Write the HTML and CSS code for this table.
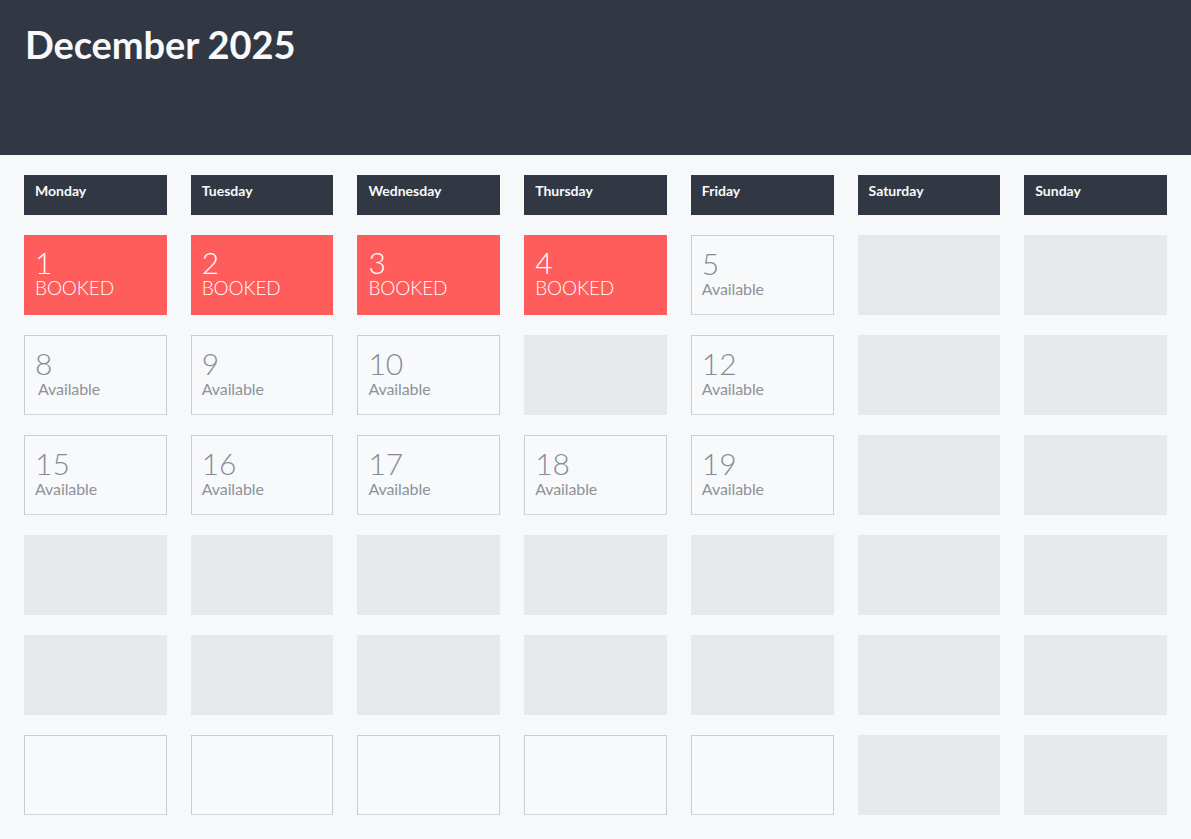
FILE: index.html
```html
<!DOCTYPE html>
<html>
<head>
<meta charset="utf-8">
<link rel="stylesheet" href="styles.css">
</head>
<body>
<header class="top">
  <h1 class="title">December 2025</h1>
</header>
<main class="calendar">
  <div class="dayname">Monday</div>
  <div class="dayname">Tuesday</div>
  <div class="dayname">Wednesday</div>
  <div class="dayname">Thursday</div>
  <div class="dayname">Friday</div>
  <div class="dayname">Saturday</div>
  <div class="dayname">Sunday</div>

  <div class="cell booked"><div class="num">1</div><div class="label">BOOKED</div></div>
  <div class="cell booked"><div class="num">2</div><div class="label">BOOKED</div></div>
  <div class="cell booked"><div class="num">3</div><div class="label">BOOKED</div></div>
  <div class="cell booked"><div class="num">4</div><div class="label">BOOKED</div></div>
  <div class="cell avail"><div class="num">5</div><div class="label">Available</div></div>
  <div class="cell empty"></div>
  <div class="cell empty"></div>

  <div class="cell avail"><div class="num">8</div><div class="label indent">Available</div></div>
  <div class="cell avail"><div class="num">9</div><div class="label">Available</div></div>
  <div class="cell avail"><div class="num">10</div><div class="label">Available</div></div>
  <div class="cell empty"></div>
  <div class="cell avail"><div class="num">12</div><div class="label">Available</div></div>
  <div class="cell empty"></div>
  <div class="cell empty"></div>

  <div class="cell avail"><div class="num">15</div><div class="label">Available</div></div>
  <div class="cell avail"><div class="num">16</div><div class="label">Available</div></div>
  <div class="cell avail"><div class="num">17</div><div class="label">Available</div></div>
  <div class="cell avail"><div class="num">18</div><div class="label">Available</div></div>
  <div class="cell avail"><div class="num">19</div><div class="label">Available</div></div>
  <div class="cell empty"></div>
  <div class="cell empty"></div>

  <div class="cell empty"></div>
  <div class="cell empty"></div>
  <div class="cell empty"></div>
  <div class="cell empty"></div>
  <div class="cell empty"></div>
  <div class="cell empty"></div>
  <div class="cell empty"></div>

  <div class="cell empty"></div>
  <div class="cell empty"></div>
  <div class="cell empty"></div>
  <div class="cell empty"></div>
  <div class="cell empty"></div>
  <div class="cell empty"></div>
  <div class="cell empty"></div>

  <div class="cell avail"></div>
  <div class="cell avail"></div>
  <div class="cell avail"></div>
  <div class="cell avail"></div>
  <div class="cell avail"></div>
  <div class="cell empty"></div>
  <div class="cell empty"></div>
</main>
</body>
</html>
```
FILE: styles.css
```css
* { box-sizing: border-box; }
html, body {
  margin: 0;
  padding: 0;
  background: #f7f8fa;
  font-family: Lato, "Open Sans", sans-serif;
}
.top {
  background: #323843;
  height: 155px;
  padding: 20px 25px 0;
}
.title {
  margin: 0;
  color: #f8f9fa;
  font-size: 38px;
  font-weight: 700;
  line-height: 48px;
  letter-spacing: -0.1px;
}
.calendar {
  display: grid;
  grid-template-columns: repeat(7, 1fr);
  grid-template-rows: 40px repeat(6, 80px);
  column-gap: 24px;
  row-gap: 20px;
  padding: 20px 24px 0;
}
.dayname {
  background: #323843;
  color: #f8f9fa;
  font-size: 14px;
  font-weight: 700;
  padding: 7px 11px 0;
  line-height: 17px;
}
.cell {
  padding: 12px 10px 0;
}
.booked {
  background: #ff5c5c;
  color: #ffffff;
  padding-left: 11px;
}
.avail {
  background: #f8f9fa;
  border: 1px solid #c9ccd1;
  border-bottom-color: #d3d5d9;
  color: #868c96;
}
.empty {
  background: #e7e8ea;
}
.num {
  font-size: 30px;
  font-weight: 300;
  line-height: 30px;
}
.booked .label {
  font-size: 19px;
  font-weight: 300;
  line-height: 22px;
  letter-spacing: -0.1px;
}
.avail .label {
  font-size: 16px;
  font-weight: 400;
  line-height: 22px;
  color: #8d929a;
  letter-spacing: -0.1px;
}
.avail .num {
  color: #868c96;
}
.label.indent {
  padding-left: 3px;
}
```
